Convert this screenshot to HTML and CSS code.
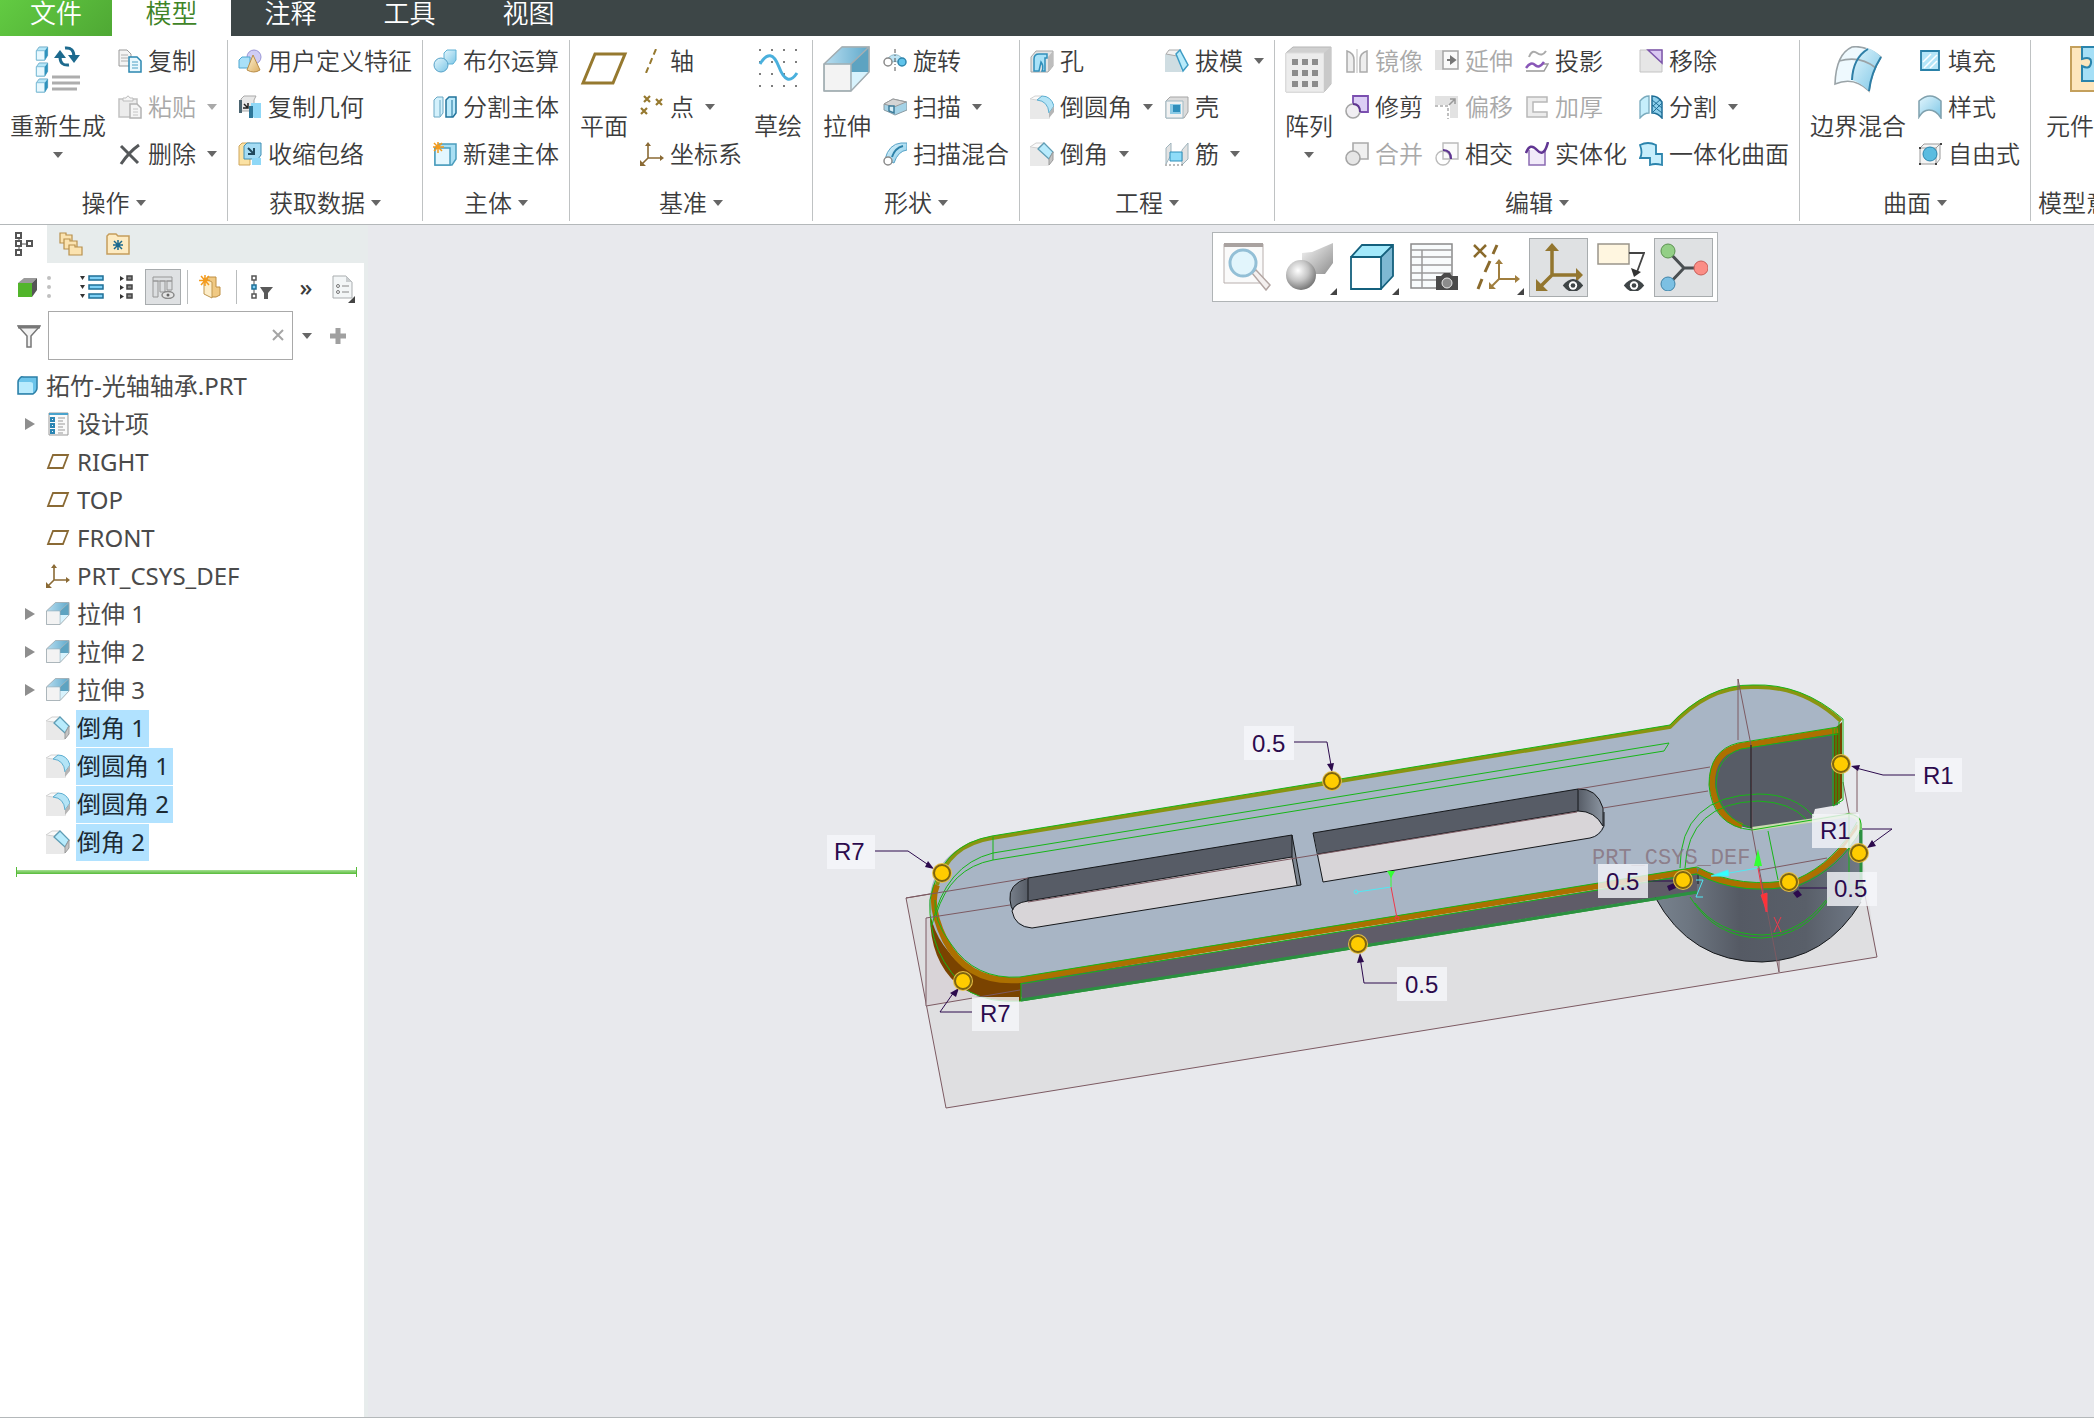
FILE: index.html
```html
<!DOCTYPE html>
<html lang="zh-CN">
<head>
    <meta charset="UTF-8">
    <meta name="viewport" content="width=device-width, initial-scale=1.0">
    <title>拓竹-光轴轴承.PRT</title>
    <link rel="stylesheet" href="styles.css">
</head>
<body>

    <!-- Icon sprite -->
    <svg class="sprite" aria-hidden="true">
        <defs>
            <linearGradient id="gBlue" x1="0" y1="0" x2="1" y2="1"><stop offset="0" stop-color="#e3f6fd"/><stop offset="1" stop-color="#7cc6e6"/></linearGradient>
            <linearGradient id="gDeep" x1="0" y1="0" x2="1" y2="0"><stop offset="0" stop-color="#b9def0"/><stop offset="1" stop-color="#5fa9cb"/></linearGradient>
            <radialGradient id="gBall" cx="0.4" cy="0.35" r="0.7"><stop offset="0" stop-color="#ffffff"/><stop offset="0.5" stop-color="#c4c4c4"/><stop offset="1" stop-color="#6e6e6e"/></radialGradient>
            <linearGradient id="gGrey" x1="0" y1="0" x2="1" y2="1"><stop offset="0" stop-color="#f8f8f8"/><stop offset="1" stop-color="#8e8e8e"/></linearGradient>
            <linearGradient id="gGold" x1="0" y1="0" x2="1" y2="1"><stop offset="0" stop-color="#fff4d6"/><stop offset="1" stop-color="#dcae62"/></linearGradient>
        </defs>

        <symbol id="i-cube" viewBox="0 0 14 16"><path d="M1 5 4 1h9v9l-3 5H1z" fill="#b5e6f8" stroke="#6fabc6"/><path d="M1 5h9v10H1z" fill="#e8f8fe" stroke="#7dbdd8"/><path d="M10 5l3-4v9l-3 5z" fill="#2f93bd"/></symbol>
        <symbol id="i-regen" viewBox="0 0 48 48">
            <use href="#i-cube" x="1" y="0" width="14" height="15"/><use href="#i-cube" x="1" y="16" width="14" height="15"/><use href="#i-cube" x="1" y="32" width="14" height="15"/>
            <g fill="none" stroke="#1d6a8e" stroke-width="3"><path d="M31 2q9-1 9 9"/><path d="M35 19q-9 1-9-8"/></g>
            <path d="M34 9h12l-6 8zM20 12h12l-6-8z" fill="#1d6a8e"/>
            <path d="M18 31h28M18 37h28M18 43h25" stroke="#adadad" stroke-width="3"/>
        </symbol>
        <symbol id="i-copy" viewBox="0 0 24 24"><path d="M1 1h8l4 4v12H1z" fill="#f4f4f4" stroke="#9a9a9a"/><path d="M3 6h7M3 9h7M3 12h7" stroke="#b0b0b0"/><path d="M11 8h8l4 4v11H11z" fill="#e9f8fe" stroke="#2b87b0" stroke-width="1.5"/><path d="M14 13h6M14 16h6M14 19h6" stroke="#4b9fc4"/></symbol>
        <symbol id="i-paste" viewBox="0 0 24 24"><path d="M1 4h18v18H1z" fill="#ececec" stroke="#c2c2c2" stroke-width="1.5"/><path d="M5 6V3h3q2-4 4 0h3v3z" fill="#f6f6f6" stroke="#bdbdbd"/><path d="M12 9h7l4 4v10H12z" fill="#f5f5f5" stroke="#b2b2b2" stroke-width="1.5"/><path d="M15 14h5M15 17h5M15 20h5" stroke="#c4c4c4"/></symbol>
        <symbol id="i-delete" viewBox="0 0 24 24"><path d="M3 4 20 21M21 3Q11 10 3 22" fill="none" stroke="#55585a" stroke-width="3"/></symbol>
        <symbol id="i-udf" viewBox="0 0 24 24"><circle cx="16" cy="8" r="7" fill="#cfcdf4" stroke="#9a96d6"/><path d="M1 11l3-3h8v11H1z" fill="#a9e0f8" stroke="#4ea6d0"/><path d="M15 6l7 15q-6 4-13 0z" fill="url(#gGold)" stroke="#b98d48"/></symbol>
        <symbol id="i-copygeom" viewBox="0 0 24 24"><path d="M3 4l3-3h12l-2 4v11H3z" fill="#e8e8e8" stroke="#a9a9a9"/><path d="M1 5h3v13H1z" fill="#4b6470"/><path d="M6 9l4 4M10 8v5H5" stroke="#222" stroke-width="1.5" fill="none"/><path d="M13 8h10v15h-7l-3-4z" fill="#8fd8f7"/><path d="M11 11h4v12h-4z" fill="#2d7698"/></symbol>
        <symbol id="i-shrink" viewBox="0 0 24 24"><path d="M1 4l3-3h8v22H1z" fill="#fbe2a4" stroke="#cfa65c"/><path d="M6 4l3-3h14v12l-3 4H6z" fill="#a5dcf4" stroke="#3f8fb4"/><path d="M10 6l6 6M16 6v6h-6" stroke="#20485c" stroke-width="2" fill="none"/><path d="M14 16h9v7h-9z" fill="#8fd8f7"/></symbol>
        <symbol id="i-bool" viewBox="0 0 24 24"><path d="M11 4l3-3h9v10l-3 4h-9z" fill="url(#gBlue)" stroke="#5fb1d4"/><circle cx="8" cy="16" r="7" fill="url(#gBlue)" stroke="#58a2c8"/></symbol>
        <symbol id="i-splitbody" viewBox="0 0 24 24"><path d="M1 5l3-3h6v16l-3 4H1z" fill="#d3f1fc" stroke="#6aa8c4"/><path d="M7 5v16" stroke="#6aa8c4"/><path d="M13 5l3-3h7v16l-3 4h-7z" fill="#bdeafb" stroke="#21739b" stroke-width="1.5"/><path d="M19 5v17" stroke="#21739b"/></symbol>
        <symbol id="i-newbody" viewBox="0 0 24 24"><path d="M2 6l4-4h17v15l-4 6H2z" fill="#a9dff3" stroke="#4b9dbd" stroke-width="1.5"/><path d="M2 6h15v17H2z" fill="#e4f7fe" stroke="#4b9dbd" stroke-width="1.5"/><path d="M5 0v11M0 5h11M1 1l8 8M9 1 1 9" stroke="#f49b1c" stroke-width="1.5"/></symbol>
        <symbol id="i-plane" viewBox="0 0 48 48"><path d="M3 37 15 8h30L33 37z" fill="none" stroke="#96792f" stroke-width="3"/></symbol>
        <symbol id="i-axis" viewBox="0 0 24 24"><path d="M16 0 6 24" stroke="#96792f" stroke-width="2" stroke-dasharray="6 4"/></symbol>
        <symbol id="i-point" viewBox="0 0 24 24"><path d="M4 1l6 6M10 1 4 7M16 4l6 6M22 4l-6 6M1 13l6 6M7 13l-6 6" stroke="#96792f" stroke-width="2.2"/></symbol>
        <symbol id="i-csys" viewBox="0 0 24 24"><path d="M8 2v14h14M8 16l-6 6" fill="none" stroke="#8a6a35" stroke-width="1.6"/><path d="M5 4l3-4 3 4zM20 13l4 3-4 3zM0 18v6h6z" fill="#8a6a35"/></symbol>
        <symbol id="i-sketch" viewBox="0 0 48 48"><g fill="#7d7d7d"><path id="dotrow" d="M5 3h2v2H5zM17 3h2v2h-2zM29 3h2v2h-2zM41 3h2v2h-2z"/><use href="#dotrow" y="12"/><use href="#dotrow" y="24"/><use href="#dotrow" y="36"/></g><path d="M6 18Q17 0 25 21T43 27" fill="none" stroke="#4ab0dd" stroke-width="3"/></symbol>
        <symbol id="i-extrude" viewBox="0 0 48 48"><path d="M1 18 19 1h27v25L28 45H1z" fill="#cde9f6" stroke="#a8a8a8"/><path d="M1 18 19 1h27L28 18z" fill="url(#gDeep)"/><path d="M28 18 46 1v25H28z" fill="#5da3c1"/><path d="M28 26h18L28 45z" fill="#d8f3fd"/><path d="M1 18h27v27H1zM28 45l18-19V1L28 18M1 18 19 1h27" fill="none" stroke="#a3aeb3" stroke-width="1.5"/><path d="M2 19h25v25H2z" fill="#f3f3f3"/></symbol>
        <symbol id="i-revolve" viewBox="0 0 24 24"><path d="M5 9q7-7 14 0v6q-7-5-14 0z" fill="#bfe5f5" stroke="#8fb9ca"/><circle cx="5" cy="13" r="4" fill="#fff" stroke="#8b8b8b" stroke-width="1.5"/><circle cx="19" cy="13" r="4" fill="#5fc3ea" stroke="#2f86ad" stroke-width="1.5"/><path d="M12 0v24" stroke="#555" stroke-dasharray="4 2 1 2"/></symbol>
        <symbol id="i-sweep" viewBox="0 0 24 24"><path d="M1 9l9-5 14 3v8l-12 5-4-2-7-3z" fill="#a5d3e7" stroke="#8a9aa2"/><path d="M1 9l10 3 12-5-13-3z" fill="#d5d5d5" stroke="#9a9a9a"/><path d="M6 11h5v7l-5-2z" fill="#d8eef6" stroke="#3c7c9a" stroke-width="1.5"/></symbol>
        <symbol id="i-sweepblend" viewBox="0 0 24 24"><path d="M2 17Q6 2 18 1h6v7q-9 1-13 13z" fill="url(#gBlue)" stroke="#57a2c6"/><path d="M9 15Q12 6 20 4" stroke="#2d81a8" stroke-width="2" fill="none"/><circle cx="5" cy="19" r="4" fill="#fff" stroke="#8a8a8a" stroke-width="1.5"/></symbol>
        <symbol id="i-hole" viewBox="0 0 24 24"><path d="M1 8 6 2h17v15l-5 6H1z" fill="#e4e4e4" stroke="#a5a5a5"/><path d="M18 8l5-6v15l-5 6z" fill="#bdbdbd"/><path d="M4 22V10q0-5 5-5h8v4h-2v13h-3q2-5-1-9l-2 9z" fill="#a9e2f8" stroke="#2f8fba" stroke-width="1.5"/></symbol>
        <symbol id="i-round" viewBox="0 0 24 24"><path d="M0 5h7q12 1 13 13v6H0z" fill="#e9e9e9"/><path d="M0 4 5 1h7L7 5z" fill="#fafafa" stroke="#d2d2d2"/><path d="M7 5q11 1 12 13l5-7Q21 1 12 1z" fill="#b4e4f6" stroke="#5badd0"/><path d="M19 18l5-7v6l-5 6z" fill="#b5b5b5"/></symbol>
        <symbol id="i-chamfer" viewBox="0 0 24 24"><path d="M0 6h8l11 11v7H0z" fill="#e9e9e9"/><path d="M0 5 6 1h8l-6 5z" fill="#fafafa" stroke="#cfcfcf"/><path d="M8 7 14 1l9 9-4 7z" fill="#b8ebfc" stroke="#5f9db5" stroke-width="1.3"/><path d="M19 17l4-7v8l-4 5z" fill="#c4c4c4" stroke="#9a9a9a"/></symbol>
        <symbol id="i-draft" viewBox="0 0 24 24"><path d="M0 5h11l6 18H0z" fill="#cfdde2"/><path d="M1 5l3-4h12l-4 6z" fill="#f2f2f2" stroke="#aaa"/><path d="M11 5 15 1l8 15-5 6z" fill="#b8ebfb" stroke="#3e9cc4" stroke-width="1.5"/></symbol>
        <symbol id="i-shell" viewBox="0 0 24 24"><path d="M1 6l4-4h18v15l-4 6H1z" fill="#dcdcdc" stroke="#a5a5a5"/><path d="M1 6h17v17H1z" fill="#f1f1f1" stroke="#9fb9c4"/><path d="M5 9h11v10H5z" fill="#8ccbe6"/><path d="M8 10h7v7H8z" fill="#2f8fbc"/></symbol>
        <symbol id="i-rib" viewBox="0 0 24 24"><path d="M1 6l5-5v12L1 22z" fill="#e2e2e2" stroke="#9fb4bd"/><path d="M17 8l6-7v16l-6 6z" fill="#e2e2e2" stroke="#9fb4bd"/><path d="M5 10h12v9H5z" fill="#8fdcf8" stroke="#2f8fba"/><path d="M0 23h18" stroke="#777" stroke-dasharray="2 2"/></symbol>
        <symbol id="i-pattern" viewBox="0 0 48 48"><path d="M1 7 8 1h38v37l-7 8H1z" fill="#d0d0d0" stroke="#b5b5b5"/><path d="M1 7h38v39H1z" fill="#ececec" stroke="#dcdcdc"/><path d="M39 7l7-6v37l-7 8z" fill="#c9c9c9"/><g fill="#8c8c8c"><path id="sqrow" d="M7 13h6v6H7zM17 13h6v6h-6zM27 13h6v6h-6z"/><use href="#sqrow" y="11"/><use href="#sqrow" y="22"/></g></symbol>
        <symbol id="i-mirror" viewBox="0 0 24 24"><path d="M2 2q7 2 7 9v12H2zM22 2q-7 2-7 9v12h7z" fill="#eee" stroke="#aaa" stroke-width="1.5"/><path d="M12 0v24" stroke="#bbb"/></symbol>
        <symbol id="i-extend" viewBox="0 0 24 24"><path d="M0 1h8v20H0z" fill="#e2e2e2"/><path d="M8 2h15v18H8z" fill="#fafafa" stroke="#a5a5a5" stroke-width="1.5"/><path d="M12 11h4M16 8l4 3-4 3z" stroke="#777" stroke-width="2" fill="#777"/></symbol>
        <symbol id="i-project" viewBox="0 0 24 24"><path d="M4 8q3-8 8-4t9-2" fill="none" stroke="#aaa" stroke-width="2"/><path d="M1 22h18l4-7h-5" fill="none" stroke="#999" stroke-width="1.5"/><path d="M1 19q5-7 9-3t9-3" fill="none" stroke="#8957b8" stroke-width="2.5"/></symbol>
        <symbol id="i-remove" viewBox="0 0 24 24"><path d="M1 1h22v22H1z" fill="#e6e6e6" stroke="#c4c4c4"/><path d="M9 1h14v13z" fill="#d9c8f2" stroke="#7d56ab" stroke-width="1.5"/></symbol>
        <symbol id="i-trim" viewBox="0 0 24 24"><path d="M8 1h15v16H8z" fill="#dccff5" stroke="#7b4fb0" stroke-width="1.8"/><circle cx="8" cy="16" r="7" fill="#f0eef2" stroke="#a5a5a5" stroke-width="1.6"/><path d="M8 9q7 0 7 8" fill="none" stroke="#5e3591" stroke-width="2"/></symbol>
        <symbol id="i-offset" viewBox="0 0 24 24"><path d="M0 1h23v22h-8V10H0z" fill="#e2e2e2"/><path d="M0 11h13v13" fill="none" stroke="#aaa" stroke-width="1.5" stroke-dasharray="3 2"/><path d="M14 10l6-6M15 4h5v5" stroke="#999" stroke-width="1.5" fill="none"/></symbol>
        <symbol id="i-thicken" viewBox="0 0 24 24"><path d="M2 2h20v5H8v10h14v5H2z" fill="#ececec" stroke="#b8b8b8" stroke-width="1.5"/></symbol>
        <symbol id="i-split" viewBox="0 0 24 24"><path d="M1 6q4-5 9-5v17q-5 0-9 5z" fill="#c6eefb" stroke="#79aabd" stroke-width="1.3"/><path d="M13 1q6 0 10 6v16q-4-5-10-5z" fill="#8fd0ec" stroke="#1f6e96" stroke-width="1.5"/><path d="M13 5l10 8M13 10l10 8M14 17 23 8M14 11l8-7" stroke="#1f6e96" stroke-width="1"/></symbol>
        <symbol id="i-merge" viewBox="0 0 24 24"><path d="M8 1h15v16H8z" fill="#f0f0f0" stroke="#aaa" stroke-width="1.6"/><circle cx="8" cy="16" r="7" fill="#e6e6e6" stroke="#a5a5a5" stroke-width="1.6"/></symbol>
        <symbol id="i-intersect" viewBox="0 0 24 24"><path d="M8 1h15v16H8z" fill="#fbfbfb" stroke="#bbb" stroke-width="1.4"/><circle cx="8" cy="16" r="7" fill="none" stroke="#bbb" stroke-width="1.4"/><path d="M8 8q8 0 8 9" fill="none" stroke="#5e3591" stroke-width="2.2"/></symbol>
        <symbol id="i-solidify" viewBox="0 0 24 24"><path d="M4 8v15h16V8" fill="#f1eaf9" stroke="#8b6bb3" stroke-width="1.5"/><path d="M1 11Q5 0 12 8t11-8" fill="none" stroke="#613693" stroke-width="2.5"/></symbol>
        <symbol id="i-quilt" viewBox="0 0 24 24"><path d="M1 3q8-4 16 0v9h6v11q-7-2-12 0v-7H1q3-5 0-13z" fill="#c6eefc" stroke="#2b84ad" stroke-width="1.8"/></symbol>
        <symbol id="i-boundary" viewBox="0 0 48 48"><path d="M1 38Q2 8 18 1q14-2 29 10-10 16-12 34Q20 30 1 38z" fill="#eef9fe" stroke="#9aa3a7" stroke-width="1.6"/><path d="M18 34Q18 10 33 2q8 2 14 9-10 16-12 34-8-8-17-11z" fill="url(#gBlue)"/><path d="M5 15q21-6 37 7" fill="none" stroke="#9aa3a7" stroke-width="1.8"/><path d="M18 34Q19 12 34 3M47 11Q37 27 35 45" fill="none" stroke="#2d7ea6" stroke-width="2"/></symbol>
        <symbol id="i-fill" viewBox="0 0 24 24"><path d="M3 2h18v19H3z" fill="#b5e6f8" stroke="#2a81a8" stroke-width="1.8"/><path d="M5 13 13 5M6 19 19 6M12 19l7-7" stroke="#fff" stroke-width="1.5"/></symbol>
        <symbol id="i-style" viewBox="0 0 24 24"><path d="M1 6q11-10 22 0v17q-5-8-12-8-6 0-10 7z" fill="url(#gBlue)" stroke="#7fa0ad" stroke-width="1.5"/></symbol>
        <symbol id="i-freestyle" viewBox="0 0 24 24"><path d="M2 6l4-4h16v15l-4 5H2zM2 6h16v16M18 6l4-4" fill="#f4f4f4" stroke="#9a9a9a"/><circle cx="12" cy="12" r="7" fill="#5bbce0" stroke="#2c86ae"/><path d="M1 5h2v2H1zM17 21h2v2h-2zM1 21h2v2H1zM22 1h2v2h-2z" fill="#444"/></symbol>
        <symbol id="i-component" viewBox="0 0 48 48"><path d="M1 1h46v44H1z" fill="#fde6bd" stroke="#c4a05c" stroke-width="2"/><path d="M12 1h35v34H12V20q8 4 9-3t-9-4z" fill="#a5dff6" stroke="#2a84ac" stroke-width="2"/></symbol>

        <symbol id="i-tree" viewBox="0 0 24 24"><path d="M7 6v13M7 12h9" stroke="#555"/><path d="M4 1h5v5H4zM4 9h5v5H4zM4 18h5v5H4zM15 9h5v5h-5z" fill="#fff" stroke="#555" stroke-width="2"/></symbol>
        <symbol id="i-folders" viewBox="0 0 24 24"><g fill="#fbe3b0" stroke="#b8904c" stroke-width="1.2"><path d="M1 3V1h6v2h6v8H1z"/><path d="M5 9V7h6v2h7v8H5z"/><path d="M10 15v-2h6v2h7v8H10z"/></g></symbol>
        <symbol id="i-folderstar" viewBox="0 0 24 24"><path d="M1 6V4l2-2h7l2 2h11v18H1z" fill="#fdebc2" stroke="#c59d5c" stroke-width="1.5"/><path d="M12 8v10M7 13h10M8 9l8 8M16 9l-8 8" stroke="#1d6a8e" stroke-width="1.5"/></symbol>
        <symbol id="i-gcube" viewBox="0 0 24 24"><path d="M2 8 8 3h13l-5 5z" fill="#9a9a9a"/><path d="M16 8l5-5v12l-5 7z" fill="#555"/><path d="M2 8h14v14H2z" fill="#52b52b"/></symbol>
        <symbol id="i-expand" viewBox="0 0 24 24"><path d="M0 1h5L2.500 5zM0 10h5l-2.500 4zM0 19h5l-2.500 4z" fill="#333"/><path d="M9 1h14v4H9zM9 10h14v4H9zM9 19h14v4H9z" fill="#7fd0f5" stroke="#1f6f96" stroke-width="1.5"/></symbol>
        <symbol id="i-collapse" viewBox="0 0 24 24"><path d="M6 1v5l4-2.500zM6 10v5l4-2.500zM6 19v5l4-2.500z" fill="#333"/><path d="M13 1h5v4h-5zM13 10h5v4h-5zM13 19h5v4h-5z" fill="#8a8a8a" stroke="#444" stroke-width="1.5"/></symbol>
        <symbol id="i-columns" viewBox="0 0 24 24"><path d="M2 2h19v4H2zM2 6h5v16H2zM9 6h5v11H9zM16 6h5v9h-5z" fill="#dcdee0" stroke="#979797" stroke-width="1"/><ellipse cx="17" cy="20" rx="6" ry="3.500" fill="#e4e4e4" stroke="#8a8a8a" stroke-width="1.5"/><circle cx="17" cy="20" r="1.500" fill="#666"/></symbol>
        <symbol id="i-newgroup" viewBox="0 0 24 24"><path d="M8 2h9v10h4v8l-4 2h-5z" fill="#f0c983" stroke="#bf8f43"/><path d="M5 3l8 4v16l-8-4z" fill="#fdedc8" stroke="#c0974f"/><path d="M6 0v11M0 5.500h11M2 1l8 9M10 1 2 10" stroke="#f49b1c" stroke-width="1.500"/></symbol>
        <symbol id="i-treefilter" viewBox="0 0 24 24"><path d="M4 5v14" stroke="#555"/><path d="M2 1h4v4H2zM2 19h4v4H2z" fill="#fff" stroke="#555" stroke-width="1.500"/><path d="M2 10h4v4H2z" fill="#7fd0f5" stroke="#1f6f96" stroke-width="1.500"/><path d="M10 12h13l-5 6v6h-4v-6z" fill="#5a5a5a"/></symbol>
        <symbol id="i-page" viewBox="0 0 24 24"><path d="M2 1h13l6 6v16H2z" fill="#f3f6f7" stroke="#a9adaf"/><path d="M15 1l6 6h-6z" fill="#c9cdcf"/><circle cx="7" cy="11" r="1.500" fill="none" stroke="#777"/><circle cx="7" cy="17" r="1.500" fill="none" stroke="#777"/><path d="M11 11h7M11 17h7" stroke="#888"/></symbol>
        <symbol id="i-funnel" viewBox="0 0 24 24"><path d="M1 2h22l-9 10v11h-4V12z" fill="#f1f1f1" stroke="#777" stroke-width="1.500"/><path d="M1 3h22" stroke="#777" stroke-width="3"/></symbol>
        <symbol id="i-part" viewBox="0 0 24 24"><path d="M3 8q0-2 2-4t3-1h14v11q0 3-4 6H3z" fill="#6cc4ea" stroke="#2c7fa6" stroke-width="1.500"/><path d="M4 8h11q3 0 3 2v9H4z" fill="#b9ebfd"/></symbol>
        <symbol id="i-design" viewBox="0 0 24 24"><path d="M3 1h19v22H3z" fill="#fafafa" stroke="#999"/><path d="M3 2h19" stroke="#4aa3cc" stroke-width="2"/><path d="M5 6h3v3H5zM5 12h3v3H5zM5 18h3v3H5z" fill="none" stroke="#2c86b4" stroke-width="2"/><path d="M12 6h7M12 9h5M12 12h7M12 15h5M12 18h7M12 21h5" stroke="#999"/></symbol>
        <symbol id="i-planesm" viewBox="0 0 24 24"><path d="M2 18 7 5h15l-5 13z" fill="none" stroke="#8a6a35" stroke-width="1.800"/></symbol>

        <symbol id="i-zoom" viewBox="0 0 48 48"><path d="M1 1h39v39H1z" fill="#fafafa" stroke="#b9b0ae"/><path d="M1 2h39" stroke="#a9a2a0" stroke-width="4"/><path d="M29 30l4-3 14 15-4 5z" fill="#f4f0ef" stroke="#b3a6a3" stroke-width="1.500"/><circle cx="20" cy="20" r="13" fill="#e2f5fc" stroke="#93bfd6" stroke-width="3"/></symbol>
        <symbol id="i-shade" viewBox="0 0 48 48"><path d="M17 10 27 9l21-9v20L40 31H17z" fill="url(#gGrey)"/><circle cx="16" cy="32" r="15" fill="url(#gBall)"/></symbol>
        <symbol id="i-box" viewBox="0 0 48 48"><path d="M3 14 14 2h31L33 14z" fill="#a3e9fb"/><path d="M33 14 45 2v31L33 46z" fill="#7eb8d3"/><path d="M3 14h30v32H3z" fill="#fff"/><path d="M3 14h30v32H3zL14 2h31v31L33 46M33 14 45 2" fill="none" stroke="#14607d" stroke-width="1.800"/></symbol>
        <symbol id="i-views" viewBox="0 0 48 48"><path d="M1 1h41v44H1z" fill="#f8fbfc" stroke="#8a8a8a" stroke-width="1.500"/><path d="M1 7h41M1 14h41M1 22h41M1 30h41M1 37h41M12 7v38" stroke="#9a9a9a" stroke-width="1.500"/><path d="M26 33h5l3-3h6l2 3h6v14H26z" fill="#4a4a4a"/><circle cx="37" cy="40" r="5" fill="#8c8c8c" stroke="#e8e8e8"/></symbol>
        <symbol id="i-datum" viewBox="0 0 48 48"><path d="M2 2l12 12M14 2 2 14" stroke="#8a6a2c" stroke-width="2.500"/><path d="M25 2l-4 9M18 18l-5 11M10 36 6 46" stroke="#8a6a2c" stroke-width="3"/><path d="M27 18v18h17M27 36l-8 8" fill="none" stroke="#a07e3e" stroke-width="2"/><path d="M23 21l4-5 4 5zM43 32l5 4-5 4zM17 39v7h7z" fill="#a07e3e"/></symbol>
        <symbol id="i-eye" viewBox="0 0 22 14"><path d="M0 7q11-14 22 0-11 14-22 0z" fill="#3f4547"/><circle cx="11" cy="7" r="4.500" fill="#fff"/><circle cx="11" cy="7" r="2.500" fill="#3f4547"/></symbol>
        <symbol id="i-csysview" viewBox="0 0 48 48"><path d="M17 6v26h26M17 32 5 44" fill="none" stroke="#93762f" stroke-width="3.500"/><path d="M10 8l7-8 7 8zM41 25l7 7-7 7zM1 36v12h12z" fill="#93762f"/><use href="#i-eye" x="27" y="36" width="22" height="13"/></symbol>
        <symbol id="i-anno" viewBox="0 0 48 48"><path d="M1 1h31v20H1z" fill="#fff6e0" stroke="#9a958a" stroke-width="1.500"/><path d="M32 10h15l-7 19" fill="none" stroke="#444" stroke-width="1.800"/><path d="M34 25l10 4-7 5z" fill="#333"/><use href="#i-eye" x="26" y="36" width="22" height="13"/></symbol>
        <symbol id="i-spin" viewBox="0 0 48 48"><path d="M8 8l16 17h17M24 25 8 42" fill="none" stroke="#4a4f52" stroke-width="3"/><circle cx="8" cy="8" r="7" fill="#93cf86" stroke="#5b9250"/><circle cx="41" cy="25" r="7" fill="#fb8d85" stroke="#c75e58"/><circle cx="8" cy="41" r="7" fill="#7cc0e3" stroke="#3f83a8"/></symbol>
    </svg>

    <nav class="tabs">
        <button class="tab tab-file">文件</button>
        <button class="tab active">模型</button>
        <button class="tab">注释</button>
        <button class="tab">工具</button>
        <button class="tab">视图</button>
    </nav>

    <header class="ribbon">
        <section class="group">
            <div class="group-body">
                <button class="big"><svg class="icon-lg"><use href="#i-regen"/></svg><span>重新生成</span><i class="caret"></i></button>
                <div class="col">
                    <button class="cmd"><svg class="icon"><use href="#i-copy"/></svg>复制</button>
                    <button class="cmd" disabled><svg class="icon"><use href="#i-paste"/></svg>粘贴<i class="caret"></i></button>
                    <button class="cmd"><svg class="icon"><use href="#i-delete"/></svg>删除<i class="caret"></i></button>
                </div>
            </div>
            <button class="group-name">操作<i class="caret"></i></button>
        </section>
        <section class="group">
            <div class="group-body">
                <div class="col">
                    <button class="cmd"><svg class="icon"><use href="#i-udf"/></svg>用户定义特征</button>
                    <button class="cmd"><svg class="icon"><use href="#i-copygeom"/></svg>复制几何</button>
                    <button class="cmd"><svg class="icon"><use href="#i-shrink"/></svg>收缩包络</button>
                </div>
            </div>
            <button class="group-name">获取数据<i class="caret"></i></button>
        </section>
        <section class="group">
            <div class="group-body">
                <div class="col">
                    <button class="cmd"><svg class="icon"><use href="#i-bool"/></svg>布尔运算</button>
                    <button class="cmd"><svg class="icon"><use href="#i-splitbody"/></svg>分割主体</button>
                    <button class="cmd"><svg class="icon"><use href="#i-newbody"/></svg>新建主体</button>
                </div>
            </div>
            <button class="group-name">主体<i class="caret"></i></button>
        </section>
        <section class="group">
            <div class="group-body">
                <button class="big"><svg class="icon-lg"><use href="#i-plane"/></svg><span>平面</span></button>
                <div class="col">
                    <button class="cmd"><svg class="icon"><use href="#i-axis"/></svg>轴</button>
                    <button class="cmd"><svg class="icon"><use href="#i-point"/></svg>点<i class="caret"></i></button>
                    <button class="cmd"><svg class="icon"><use href="#i-csys"/></svg>坐标系</button>
                </div>
                <button class="big"><svg class="icon-lg"><use href="#i-sketch"/></svg><span>草绘</span></button>
            </div>
            <button class="group-name">基准<i class="caret"></i></button>
        </section>
        <section class="group">
            <div class="group-body">
                <button class="big"><svg class="icon-lg"><use href="#i-extrude"/></svg><span>拉伸</span></button>
                <div class="col">
                    <button class="cmd"><svg class="icon"><use href="#i-revolve"/></svg>旋转</button>
                    <button class="cmd"><svg class="icon"><use href="#i-sweep"/></svg>扫描<i class="caret"></i></button>
                    <button class="cmd"><svg class="icon"><use href="#i-sweepblend"/></svg>扫描混合</button>
                </div>
            </div>
            <button class="group-name">形状<i class="caret"></i></button>
        </section>
        <section class="group">
            <div class="group-body">
                <div class="col">
                    <button class="cmd"><svg class="icon"><use href="#i-hole"/></svg>孔</button>
                    <button class="cmd"><svg class="icon"><use href="#i-round"/></svg>倒圆角<i class="caret"></i></button>
                    <button class="cmd"><svg class="icon"><use href="#i-chamfer"/></svg>倒角<i class="caret"></i></button>
                </div>
                <div class="col">
                    <button class="cmd"><svg class="icon"><use href="#i-draft"/></svg>拔模<i class="caret"></i></button>
                    <button class="cmd"><svg class="icon"><use href="#i-shell"/></svg>壳</button>
                    <button class="cmd"><svg class="icon"><use href="#i-rib"/></svg>筋<i class="caret"></i></button>
                </div>
            </div>
            <button class="group-name">工程<i class="caret"></i></button>
        </section>
        <section class="group">
            <div class="group-body">
                <button class="big"><svg class="icon-lg"><use href="#i-pattern"/></svg><span>阵列</span><i class="caret"></i></button>
                <div class="col">
                    <button class="cmd" disabled><svg class="icon"><use href="#i-mirror"/></svg>镜像</button>
                    <button class="cmd"><svg class="icon"><use href="#i-trim"/></svg>修剪</button>
                    <button class="cmd" disabled><svg class="icon"><use href="#i-merge"/></svg>合并</button>
                </div>
                <div class="col">
                    <button class="cmd" disabled><svg class="icon"><use href="#i-extend"/></svg>延伸</button>
                    <button class="cmd" disabled><svg class="icon"><use href="#i-offset"/></svg>偏移</button>
                    <button class="cmd"><svg class="icon"><use href="#i-intersect"/></svg>相交</button>
                </div>
                <div class="col">
                    <button class="cmd"><svg class="icon"><use href="#i-project"/></svg>投影</button>
                    <button class="cmd" disabled><svg class="icon"><use href="#i-thicken"/></svg>加厚</button>
                    <button class="cmd"><svg class="icon"><use href="#i-solidify"/></svg>实体化</button>
                </div>
                <div class="col">
                    <button class="cmd"><svg class="icon"><use href="#i-remove"/></svg>移除</button>
                    <button class="cmd"><svg class="icon"><use href="#i-split"/></svg>分割<i class="caret"></i></button>
                    <button class="cmd"><svg class="icon"><use href="#i-quilt"/></svg>一体化曲面</button>
                </div>
            </div>
            <button class="group-name">编辑<i class="caret"></i></button>
        </section>
        <section class="group">
            <div class="group-body">
                <button class="big"><svg class="icon-lg"><use href="#i-boundary"/></svg><span>边界混合</span></button>
                <div class="col">
                    <button class="cmd"><svg class="icon"><use href="#i-fill"/></svg>填充</button>
                    <button class="cmd"><svg class="icon"><use href="#i-style"/></svg>样式</button>
                    <button class="cmd"><svg class="icon"><use href="#i-freestyle"/></svg>自由式</button>
                </div>
            </div>
            <button class="group-name">曲面<i class="caret"></i></button>
        </section>
        <section class="group group-last">
            <div class="group-body">
                <button class="big"><svg class="icon-lg"><use href="#i-component"/></svg><span>元件界面</span></button>
            </div>
            <button class="group-name">模型意图<i class="caret"></i></button>
        </section>
    </header>

    <main class="workspace">
        <aside class="panel">
            <div class="panel-tabs">
                <button class="panel-tab active" aria-label="模型树"><svg class="icon"><use href="#i-tree"/></svg></button>
                <button class="panel-tab" aria-label="文件夹浏览器"><svg class="icon"><use href="#i-folders"/></svg></button>
                <button class="panel-tab" aria-label="收藏夹"><svg class="icon"><use href="#i-folderstar"/></svg></button>
            </div>

            <div class="panel-tools">
                <button class="tool" aria-label="模型"><svg class="icon"><use href="#i-gcube"/></svg></button>
                <span class="grip"></span>
                <button class="tool" aria-label="展开"><svg class="icon"><use href="#i-expand"/></svg></button>
                <button class="tool" aria-label="折叠"><svg class="icon"><use href="#i-collapse"/></svg></button>
                <button class="tool pressed" aria-label="列"><svg class="icon"><use href="#i-columns"/></svg></button>
                <span class="sep"></span>
                <button class="tool" aria-label="新建组"><svg class="icon"><use href="#i-newgroup"/></svg></button>
                <span class="sep"></span>
                <button class="tool" aria-label="树过滤器"><svg class="icon"><use href="#i-treefilter"/></svg></button>
                <button class="tool more">»</button>
                <button class="tool corner" aria-label="设置"><svg class="icon"><use href="#i-page"/></svg></button>
            </div>

            <div class="search">
                <svg class="icon"><use href="#i-funnel"/></svg>
                <div class="search-box">
                    <input type="text" aria-label="搜索">
                    <button class="clear" aria-label="清除"><svg viewBox="0 0 12 12"><path d="M1 1l10 10M11 1 1 11"/></svg></button>
                </div>
                <button class="search-menu" aria-label="搜索选项"><i class="caret"></i></button>
                <button class="search-add" aria-label="添加"><svg viewBox="0 0 16 16"><path d="M8 0v16M0 8h16"/></svg></button>
            </div>

            <ul class="tree">
                <li class="root"><svg class="icon"><use href="#i-part"/></svg><span>拓竹-光轴轴承.PRT</span></li>
                <li><i class="twist"></i><svg class="icon"><use href="#i-design"/></svg><span>设计项</span></li>
                <li><svg class="icon"><use href="#i-planesm"/></svg><span>RIGHT</span></li>
                <li><svg class="icon"><use href="#i-planesm"/></svg><span>TOP</span></li>
                <li><svg class="icon"><use href="#i-planesm"/></svg><span>FRONT</span></li>
                <li><svg class="icon"><use href="#i-csys"/></svg><span>PRT_CSYS_DEF</span></li>
                <li><i class="twist"></i><svg class="icon"><use href="#i-extrude"/></svg><span>拉伸 1</span></li>
                <li><i class="twist"></i><svg class="icon"><use href="#i-extrude"/></svg><span>拉伸 2</span></li>
                <li><i class="twist"></i><svg class="icon"><use href="#i-extrude"/></svg><span>拉伸 3</span></li>
                <li class="selected"><svg class="icon"><use href="#i-chamfer"/></svg><span>倒角 1</span></li>
                <li class="selected"><svg class="icon"><use href="#i-round"/></svg><span>倒圆角 1</span></li>
                <li class="selected"><svg class="icon"><use href="#i-round"/></svg><span>倒圆角 2</span></li>
                <li class="selected"><svg class="icon"><use href="#i-chamfer"/></svg><span>倒角 2</span></li>
            </ul>
            <div class="insert-here"></div>
        </aside>

        <div class="viewport">
            <!-- 3D model -->
            <svg class="model" viewBox="368 225 1726 1192" preserveAspectRatio="xMinYMin meet">
                <defs>
                    <linearGradient id="gHub" x1="0" x2="1"><stop offset="0" stop-color="#7d8894"/><stop offset="0.220" stop-color="#6d7681"/><stop offset="0.450" stop-color="#555a64"/><stop offset="0.750" stop-color="#595f69"/><stop offset="1" stop-color="#707986"/></linearGradient>
                    <linearGradient id="gEndL" x1="0" x2="1"><stop offset="0" stop-color="#777f8a"/><stop offset="1" stop-color="#565c66"/></linearGradient>
                    <linearGradient id="gEndR" x1="0" x2="1"><stop offset="0" stop-color="#565c66"/><stop offset="1" stop-color="#8e98a4"/></linearGradient>
                    <g id="marker"><circle r="10" fill="#e6bf45"/><circle r="8" fill="#fc0" stroke="#7d6410" stroke-width="2"/></g>
                </defs>

                <!-- datum planes -->
                <path class="plane-fill" d="M906 898 1010 880 1856 812 1877 957 946 1108z"/>
                <path class="datum" d="M1843 782 1877 957 946 1108 906 898 1017 879"/>
                <path class="plane-fill2" d="M926 918 1020 905V990L926 1006z"/>

                <!-- hub -->
                <path class="hub" d="M1655 897Q1690 962 1762 962 1826 960 1861 902V822L1698 860 1640 890z"/>

                <!-- side walls -->
                <path class="wall" d="M1018 982 1240 948 1697 873V891L1240 965 1022 1001z"/>
                <path class="corner-wall" d="M930 915Q930 960 957 984 978 1002 1021 1001V980Q960 985 940 935z"/>

                <!-- top face -->
                <path class="face" d="M992 837 1670 726Q1708 686 1753 686 1802 684 1842 719L1838 727 1738 743Q1709 752 1709 785 1716 826 1752 829L1850 814Q1861 815 1861 822 1846 862 1797 880 1745 893 1698 868L1240 945 1020 980Q985 985 962 965 932 940 929 905 932 847 992 837z"/>

                <!-- slots -->
                <path class="floor" d="M1028 901 1292 857 1301 885 1032 928Q1014 924 1012 911 1016 902 1028 901z"/>
                <path class="wall-dark" d="M1028 878 1292 835V857L1028 901z"/>
                <path fill="url(#gEndL)" d="M1028 878Q1008 884 1010 900 1010 908 1013 910 1017 902 1028 901z"/>
                <path class="wall-strip" d="M1292 835 1301 885H1297L1292 857z"/>
                <path class="floor" d="M1318 854 1577 811Q1596 812 1603 826 1598 836 1590 838L1323 882z"/>
                <path class="wall-dark" d="M1313 833 1578 789V811L1318 854z"/>
                <path fill="url(#gEndR)" d="M1578 789Q1597 788 1603 808L1604 826H1602Q1595 811 1578 811z"/>
                <g class="ink">
                    <path d="M1028 878Q1008 884 1010 900 1011 908 1013 910M1028 878 1292 835M1028 901 1292 857M1028 878V901Q1014 903 1012 911 1015 927 1032 928L1301 885 1292 835V857L1297 885"/>
                    <path d="M1313 833 1578 789V811L1318 854M1578 789Q1597 788 1603 808V826Q1595 811 1578 811M1604 812V826Q1600 836 1590 838L1323 882 1313 833"/>
                    <path d="M1655 897Q1690 962 1762 962 1826 960 1861 902M1698 874V884"/>
                </g>

                <!-- pocket -->
                <path class="pocket" d="M1836 730 1740 746Q1713 755 1713 785 1716 824 1752 829L1812 819 1815 809 1838 805z"/>
                <path class="corner-wall" d="M1834 729 1842 722V798L1834 805z"/>

                <!-- chamfer band -->
                <path class="band" d="M1838 730 1740 746Q1711 753 1712 785 1716 818 1742 826"/>
                <path class="band" d="M1697 870 1240 944 1020 980Q968 984 945 940 928 905 937 885"/>
                <path class="band" d="M1698 871Q1740 893 1797 882 1836 866 1859 826"/>
                <path class="band-thin" d="M937 885Q948 845 992 838L1670 727Q1708 686 1753 687 1802 685 1841 721"/>
                <path class="band-pale" d="M1752 829 1850 815Q1862 817 1859 830L1846 848"/>

                <g class="green">
                    <path d="M992 836 1670 725Q1708 684 1753 685 1802 683 1843 719V800L1833 806V728M1838 727 1738 743Q1709 750 1709 785 1712 826 1752 830L1848 814Q1861 815 1861 824V900"/>
                    <path d="M1838 734 1741 749Q1716 757 1716 787 1722 820 1752 828M1839 722V804M1836 728V804"/>
                    <path d="M992 836Q940 845 930 900 927 955 970 992 990 1003 1021 1001L1240 967 1697 893M1021 1001V984M1020 977 1697 867Q1740 890 1797 879 1835 862 1857 822M1020 984 1240 948 1697 874Q1740 897 1800 885 1840 868 1861 830M1020 977Q975 980 951 944 933 920 935 900"/>
                    <path d="M993 853 1669 743 1664 751 993 860V837M993 853Q945 865 932 925M993 860Q950 868 936 915"/>
                    <path d="M1768 831 1778 880M1849 815V885H1861"/>
                    <path d="M1680 868Q1680 796 1758 794 1795 794 1814 817M1685 868Q1688 803 1758 801 1790 802 1806 819M1690 897Q1715 938 1762 938 1805 936 1830 897M1695 903Q1718 934 1762 935 1800 934 1826 900"/>
                </g>
                <path class="green-edge" d="M1021 1000 1240 966 1697 892M1861 830V898"/>

                <!-- datum lines over the part -->
                <path class="datum" d="M906 898 1028 878M926 1006V918L1010 905M926 1006 1020 990M1028 902 1577 812M1578 789 1710 767M1603 808 1708 791M1738 740V679L1751 745 1752 830 1759 868 1779 972V960M1857 812V767M1760 870 1827 858"/>
                <path class="ink" d="M1751 745V828"/>

                <!-- coordinate systems -->
                <text class="csys-name" x="1592" y="864">PRT_CSYS_DEF</text>
                <g class="cs-y"><path d="M1391 874V887M1758 868V856"/><path d="M1387 871h8l-4 7zM1758 849l4 17h-8z" stroke="none" fill="#3f3"/></g>
                <g class="cs-z"><path d="M1391 887 1357 892M1758 868 1712 876M1696 880h7l-7 17h7"/><circle cx="1356" cy="892" r="2"/><path d="M1711 876l17-6 1 6z" fill="#3ff"/></g>
                <g class="cs-x"><path d="M1391 887 1397 918M1758 868 1766 912M1774 917l7 15M1781 917l-7 15"/><circle cx="1397" cy="918" r="2"/><path d="M1761 895l6-2v19z" fill="#f33"/></g>

                <!-- dimension callouts -->
                <g class="callout">
                    <path class="leader" d="M1294 742H1327L1331 765"/><path class="head" d="M1327 764l7-1-2 9z"/>
                    <rect x="1244" y="726" width="50" height="34"/><text x="1252" y="752">0.5</text>
                    <path class="leader" d="M1397 983H1364L1360 957"/><path class="head" d="M1357 963l7-1-4-9z"/>
                    <rect x="1397" y="967" width="50" height="34"/><text x="1405" y="993">0.5</text>
                    <path class="leader" d="M875 851H908L930 866"/><path class="head" d="M928 861l-3 6 9 2z"/>
                    <rect x="827" y="835" width="48" height="34"/><text x="834" y="860">R7</text>
                    <path class="leader" d="M972 1012H940L954 992"/><path class="head" d="M950 993l6 4 3-9z"/>
                    <rect x="972" y="997" width="47" height="34"/><text x="980" y="1022">R7</text>
                    <path class="leader" d="M1915 775H1883L1856 768"/><path class="head" d="M1860 765l-2 6-7-5z"/>
                    <rect x="1915" y="758" width="47" height="34"/><text x="1923" y="784">R1</text>
                    <path class="leader" d="M1862 829H1892L1870 845"/><path class="head" d="M1872 840l4 6-9 2z"/>
                    <rect x="1812" y="814" width="47" height="34"/><text x="1820" y="839">R1</text>
                    <path class="leader" d="M1648 881H1676"/><path class="head" d="M1667 886l7-3 2 5-7 3z"/>
                    <rect x="1598" y="864" width="50" height="34"/><text x="1606" y="890">0.5</text>
                    <path class="leader" d="M1827 888H1799"/><path class="head" d="M1793 893l5-3 4 5-5 3z"/>
                    <rect x="1827" y="872" width="50" height="34"/><text x="1834" y="897">0.5</text>
                </g>
                <use href="#marker" x="1332" y="781"/>
                <use href="#marker" x="1358" y="944"/>
                <use href="#marker" x="942" y="873"/>
                <use href="#marker" x="963" y="981"/>
                <use href="#marker" x="1841" y="764"/>
                <use href="#marker" x="1859" y="853"/>
                <use href="#marker" x="1683" y="880"/>
                <use href="#marker" x="1789" y="882"/>
            </svg>

            <!-- floating graphics toolbar -->
            <div class="view-tools">
                <button aria-label="重新调整"><svg class="icon-lg"><use href="#i-zoom"/></svg></button>
                <button class="corner" aria-label="着色"><svg class="icon-lg"><use href="#i-shade"/></svg></button>
                <button class="corner" aria-label="显示样式"><svg class="icon-lg"><use href="#i-box"/></svg></button>
                <button aria-label="已保存方向"><svg class="icon-lg"><use href="#i-views"/></svg></button>
                <button class="corner" aria-label="基准显示"><svg class="icon-lg"><use href="#i-datum"/></svg></button>
                <button class="pressed" aria-label="坐标系显示"><svg class="icon-lg"><use href="#i-csysview"/></svg></button>
                <button aria-label="注释显示"><svg class="icon-lg"><use href="#i-anno"/></svg></button>
                <button class="pressed" aria-label="旋转中心"><svg class="icon-lg"><use href="#i-spin"/></svg></button>
            </div>
        </div>
    </main>

</body>
</html>
```

FILE: styles.css
```css
* {
    box-sizing: border-box;
}
body {
    margin: 0;
    min-height: 100vh;
    display: flex;
    flex-direction: column;
    overflow: hidden;
    background: #fff;
    color: #3c3c3c;
    font-family: 'Noto Sans', 'Noto Sans CJK SC', sans-serif;
    font-size: 24px;
    font-weight: 350;
    line-height: 24px;
}
button {
    margin: 0;
    padding: 0;
    border: none;
    background: none;
    color: inherit;
    font: inherit;
    white-space: nowrap;
    cursor: pointer;
}
.sprite {
    position: absolute;
    width: 0;
    height: 0;
}
.icon {
    width: 24px;
    height: 24px;
    flex: none;
}
.icon-lg {
    width: 48px;
    height: 48px;
    flex: none;
}
.caret {
    border: 5px solid transparent;
    border-top: 6px solid #666;
    border-bottom: none;
    flex: none;
}

/* Tabs */
.tabs {
    display: flex;
    height: 36px;
    background: #3d4647;
}
.tab {
    width: 119px;
    padding-bottom: 10px;
    color: #fff;
    font-size: 26px;
    line-height: 26px;
}
.tab-file {
    width: 112px;
    background: linear-gradient(135deg, #62cb42, #4fa834);
}
.tab.active {
    background: #fff;
    color: #3f8427;
}

/* Ribbon */
.ribbon {
    display: flex;
    height: 189px;
    padding: 4px 0 3px;
    border-bottom: 1px solid #b4b8ba;
    overflow: hidden;
}
.group {
    display: flex;
    flex-direction: column;
    flex: none;
    padding: 0 10px;
    border-right: 1px solid #bfc2c3;
}
.group-last {
    padding: 0 7px;
}
.group-body {
    display: flex;
    justify-content: center;
    gap: 12px;
    height: 138px;
}
.col {
    display: grid;
    grid-template-rows: 42px 50px 44px;
}
.cmd {
    display: flex;
    align-items: center;
    gap: 6px;
}
.cmd .caret {
    margin-left: 5px;
}
.cmd:disabled {
    color: #a9a9a9;
    cursor: default;
}
.cmd:disabled .caret {
    border-top-color: #a9a9a9;
}
.big {
    display: flex;
    flex-direction: column;
    align-items: center;
    padding-top: 6px;
}
.big span {
    margin: 20px 0 14px;
}
.group-name {
    display: flex;
    align-items: center;
    justify-content: center;
    gap: 6px;
    margin-top: 13px;
}

/* Left panel */
.workspace {
    display: flex;
    flex: 1;
    margin-bottom: 2px;
    border-bottom: 1px solid #b4b8ba;
}
.panel {
    width: 368px;
    flex: none;
    border-right: 4px solid #e7ecec;
}
.panel-tabs {
    display: flex;
    height: 38px;
    background: #e7ecec;
}
.panel-tab {
    display: flex;
    align-items: center;
    justify-content: center;
    width: 47px;
}
.panel-tab.active {
    background: #fff;
}
.panel-tools {
    display: grid;
    grid-template-columns: 24px 38px 28px 39px 36px 12px 36px 14px 38px 50px 24px;
    align-items: center;
    justify-items: center;
    height: 48px;
    padding-left: 16px;
}
.tool {
    display: flex;
    align-items: center;
    justify-content: center;
    width: 28px;
    height: 36px;
}
.pressed {
    width: 36px;
    background: #dfe1e3;
    border: 1px solid #a8acae;
}
.more {
    font-weight: 500;
}
.grip {
    justify-self: start;
    margin-left: 7px;
    height: 22px;
    border-left: 4px dotted #c0c0c0;
}
.sep {
    width: 1px;
    height: 34px;
    background: #b9bcbd;
}
.corner {
    position: relative;
}
.corner::after {
    content: "";
    position: absolute;
    right: 2px;
    bottom: 2px;
    border-left: 7px solid transparent;
    border-bottom: 7px solid #444;
}
.search {
    display: flex;
    align-items: center;
    padding: 0 16px 0 17px;
}
.search-box {
    position: relative;
    width: 245px;
    margin-left: 7px;
}
.search-box input {
    display: block;
    width: 100%;
    height: 49px;
    padding: 0 32px 0 8px;
    border: 1px solid #a9a9a9;
    font: inherit;
}
.clear {
    position: absolute;
    right: 9px;
    top: 12px;
    width: 12px;
    height: 24px;
}
.clear svg {
    display: block;
    width: 12px;
    height: 12px;
    stroke: #a5a5a5;
    stroke-width: 2;
}
.search-menu {
    display: flex;
    margin-left: 9px;
}
.search-add {
    display: flex;
    margin-left: 18px;
}
.search-add svg {
    width: 16px;
    height: 16px;
    stroke: #a0a0a0;
    stroke-width: 5;
}
.tree {
    list-style: none;
    margin: 7px 0 0;
    padding: 0;
    color: #4a4a4a;
    font-weight: 400;
}
.tree li {
    display: flex;
    align-items: center;
    justify-content: flex-start;
    height: 38px;
    padding-left: 46px;
}
.tree li.root {
    padding-left: 15px;
}
.tree span {
    margin-left: 6px;
    padding: 6px 4px 7px 1px;
}
.tree .selected span {
    background: #b1e2ff;
    color: #1c2a33;
}
.twist {
    margin: 0 11px 0 -21px;
    border: 6px solid transparent;
    border-left: 10px solid #8e8e8e;
    border-right: none;
}
.insert-here {
    height: 10px;
    margin: 6px 7px 0 16px;
    border: 2px solid #57bb3a;
    border-width: 0 1px;
    background: linear-gradient(#a5e092, #57bb3a) center / 100% 4px no-repeat;
}

/* Graphics area */
.viewport {
    position: relative;
    flex: 1;
    min-width: 0;
    background: #e8e9ed;
}
.view-tools {
    position: absolute;
    top: 7px;
    right: 22%;
    display: flex;
    align-items: center;
    justify-content: space-between;
    width: 506px;
    height: 70px;
    margin-right: -4px;
    padding: 0 4px;
    background: #fff;
    border: 1px solid #b0b4b6;
}
.view-tools button {
    display: flex;
    align-items: center;
    justify-content: center;
    width: 59px;
    height: 59px;
}
.model {
    display: block;
    width: 100%;
}
.plane-fill {
    fill: #dfdfe1;
}
.plane-fill2 {
    fill: #d9d4d8;
}
.datum {
    fill: none;
    stroke: #7c5a62;
}
.hub {
    fill: url(#gHub);
}
.wall {
    fill: #5f5c68;
}
.wall-dark,
.pocket {
    fill: #575c66;
}
.wall-strip {
    fill: #7d8691;
}
.corner-wall {
    fill: #7a4300;
}
.face {
    fill: #a8b5c5;
}
.floor {
    fill: #d8d5d8;
}
.ink {
    fill: none;
    stroke: #15171a;
}
.band {
    fill: none;
    stroke: #ac7000;
    stroke-width: 6;
}
.band-thin {
    fill: none;
    stroke: #8a9410;
    stroke-width: 4;
}
.band-pale {
    fill: none;
    stroke: #c8dcae;
    stroke-width: 4;
}
.green {
    fill: none;
    stroke: #17b617;
}
.green-edge {
    fill: none;
    stroke: #2b9040;
    stroke-width: 3;
}
.csys-name {
    fill: #86707c;
    fill-opacity: 0.8;
    font-family: 'Liberation Mono', monospace;
    font-size: 22px;
    font-weight: 400;
}
.cs-y {
    fill: none;
    stroke: #3f3;
}
.cs-z {
    fill: none;
    stroke: #4fe9f3;
}
.cs-x {
    fill: none;
    stroke: #f0384a;
}
.leader {
    fill: none;
    stroke: #2c0a4d;
}
.head {
    fill: #2c0a4d;
}
.callout rect {
    fill: #f5f6fa;
    fill-opacity: 0.8;
}
.callout text {
    fill: #2c0a4d;
    font-family: 'Liberation Sans', sans-serif;
    font-size: 24px;
    font-weight: 400;
}
```
